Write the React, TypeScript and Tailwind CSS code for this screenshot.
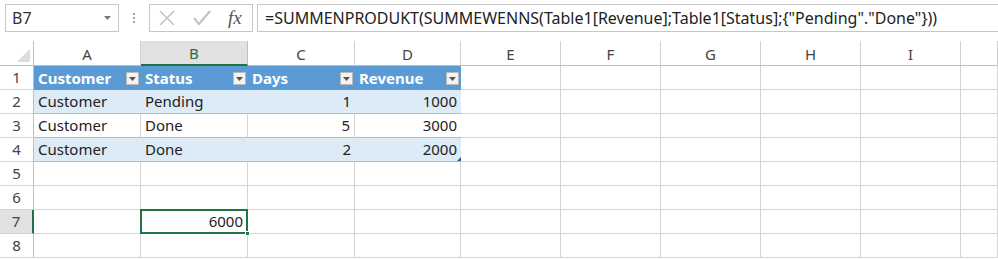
import React from "react";

const COLS = ["A", "B", "C", "D", "E", "F", "G", "H", "I", "J"];

type Cell = { v?: string; right?: boolean };

const tableHeader = ["Customer", "Status", "Days", "Revenue"];
const tableRows: Cell[][] = [
  [{ v: "Customer" }, { v: "Pending" }, { v: "1", right: true }, { v: "1000", right: true }],
  [{ v: "Customer" }, { v: "Done" }, { v: "5", right: true }, { v: "3000", right: true }],
  [{ v: "Customer" }, { v: "Done" }, { v: "2", right: true }, { v: "2000", right: true }],
];

function DropBtn() {
  return (
    <div className="absolute right-[2px] top-[6px] w-[13px] h-[13px] bg-[#f3f3f3] border border-[#b8b8b8] flex items-center justify-center">
      <svg width="7" height="4" viewBox="0 0 7 4">
        <path d="M0 0 L7 0 L3.5 4 Z" fill="#555" />
      </svg>
    </div>
  );
}

export default function App() {
  const font = { fontFamily: '"Noto Sans", "Liberation Sans", sans-serif' };
  return (
    <div className="w-[998px] h-[259px] overflow-hidden bg-white text-[#222]" style={font}>
      {/* Toolbar */}
      <div className="h-[41px] flex items-start pt-[4px] pl-[5px]">
        <div className="w-[114px] h-[28px] border border-[#c6c6c6] flex items-center justify-between pl-[6px] pr-[7px]">
          <span className="text-[16px] text-[#333]">B7</span>
          <svg width="7" height="4" viewBox="0 0 7 4">
            <path d="M0 0 L7 0 L3.5 4 Z" fill="#777" />
          </svg>
        </div>
        <div className="w-[30px] h-[28px] flex flex-col items-center justify-center gap-[2px]">
          <div className="w-[2px] h-[2px] bg-[#a0a0a0]" />
          <div className="w-[2px] h-[2px] bg-[#a0a0a0]" />
          <div className="w-[2px] h-[2px] bg-[#a0a0a0]" />
        </div>
        <div className="w-[104px] h-[28px] border border-[#c6c6c6] flex items-center pl-[8px] gap-[16px]">
          <svg width="18" height="18" viewBox="0 0 18 18">
            <path d="M2 2 L16 16 M16 2 L2 16" stroke="#c4c4c4" strokeWidth="1.6" fill="none" />
          </svg>
          <svg width="20" height="18" viewBox="0 0 20 18">
            <path d="M2 9 L7 15 L18 2" stroke="#c4c4c4" strokeWidth="2.2" fill="none" />
          </svg>
          <span
            className="text-[19px] italic text-[#555] leading-none -mt-[2px]"
            style={{ fontFamily: '"Liberation Serif", serif' }}
          >
            fx
          </span>
        </div>
        <div className="flex-1 ml-[4px] h-[28px] border border-[#c6c6c6] border-r-0 flex items-center pl-[7px] whitespace-nowrap overflow-hidden">
          <span className="text-[16px] text-[#222]">
            =SUMMENPRODUKT(SUMMEWENNS(Table1[Revenue];Table1[Status];{"{"}"Pending"."Done"{"}"}))
          </span>
        </div>
      </div>

      {/* Grid */}
      <div className="grid grid-cols-[34px_107px_107px_107px_106px_100px_100px_100px_100px_100px_37px] grid-rows-[25px_repeat(8,24px)]">
        {/* corner */}
        <div className="relative border-r border-b border-[#bfbfbf] bg-white">
          <svg className="absolute right-[3px] bottom-[3px]" width="13" height="13" viewBox="0 0 13 13">
            <path d="M13 0 L13 13 L0 13 Z" fill="#dcdcdc" />
          </svg>
        </div>
        {COLS.map((c) =>
          c === "B" ? (
            <div
              key={c}
              className="bg-[#e1e1e1] border-r border-[#bfbfbf] border-b-2 border-b-[#217346] flex items-center justify-center text-[15px] text-[#217346] pt-[2px]"
            >
              {c}
            </div>
          ) : (
            <div
              key={c}
              className="bg-white border-r border-b border-[#d0d0d0] border-b-[#bfbfbf] flex items-center justify-center text-[15px] text-[#444] pt-[2px]"
            >
              {c === "J" ? "" : c}
            </div>
          )
        )}

        {/* Row 1: table header */}
        <div className="border-r border-b border-[#bfbfbf] border-b-[#d4d4d4] bg-white flex items-center justify-center text-[15px] text-[#444]">
          1
        </div>
        {tableHeader.map((h) => (
          <div
            key={h}
            className="relative bg-[#5b9bd5] text-white font-bold text-[15px] flex items-center pl-[4px]"
          >
            {h}
            <DropBtn />
          </div>
        ))}
        {COLS.slice(4).map((c) => (
          <div key={c} className="border-r border-b border-[#d4d4d4]" />
        ))}

        {/* Rows 2-4 */}
        {tableRows.map((row, ri) => {
          const banded = ri % 2 === 0;
          return (
            <React.Fragment key={ri}>
              <div className="border-r border-b border-[#bfbfbf] border-b-[#d4d4d4] bg-white flex items-center justify-center text-[15px] text-[#444]">
                {ri + 2}
              </div>
              {row.map((cell, ci) => (
                <div
                  key={ci}
                  className={
                    (banded
                      ? "bg-[#ddebf7] border-b border-[#9bc2e6] "
                      : "bg-white border-r border-r-[#d4d4d4] border-b border-b-[#9bc2e6] ") +
                    (ci === 3 ? "border-r-0 " : "") +
                    "relative flex items-center text-[15px] text-[#222] " +
                    (cell.right ? "justify-end pr-[4px]" : "pl-[4px]")
                  }
                >
                  {cell.v}
                  {ri === 2 && ci === 3 && (
                    <svg className="absolute right-[0px] bottom-[0px]" width="4" height="4" viewBox="0 0 4 4">
                      <path d="M4 0 L4 4 L0 4 Z" fill="#2f5597" />
                    </svg>
                  )}
                </div>
              ))}
              {COLS.slice(4).map((c, i) => (
                <div
                  key={c}
                  className={
                    "border-r border-b border-[#d4d4d4] " + (i === 0 ? "border-l border-l-[#9bc2e6] -ml-px" : "")
                  }
                />
              ))}
            </React.Fragment>
          );
        })}

        {/* Rows 5-8 */}
        {[5, 6, 7, 8].map((r) => (
          <React.Fragment key={r}>
            <div
              className={
                "flex items-center justify-center text-[15px] text-[#444] border-b border-[#d4d4d4] " +
                (r === 7
                  ? "bg-[#e1e1e1] border-r-2 border-r-[#217346]"
                  : "bg-white border-r border-r-[#bfbfbf]")
              }
            >
              {r}
            </div>
            {COLS.map((c) =>
              r === 7 && c === "B" ? (
                <div
                  key={c}
                  className="relative border-r border-b border-[#d4d4d4] flex items-center justify-end pr-[4px] text-[15px] text-[#222]"
                >
                  6000
                  <div className="absolute -left-px -top-px -right-px -bottom-px border-2 border-[#217346]" />
                  <div className="absolute -right-[3px] -bottom-[3px] w-[5px] h-[5px] bg-[#217346] border border-white" />
                </div>
              ) : (
                <div key={c} className="border-r border-b border-[#d4d4d4]" />
              )
            )}
          </React.Fragment>
        ))}
      </div>
    </div>
  );
}
